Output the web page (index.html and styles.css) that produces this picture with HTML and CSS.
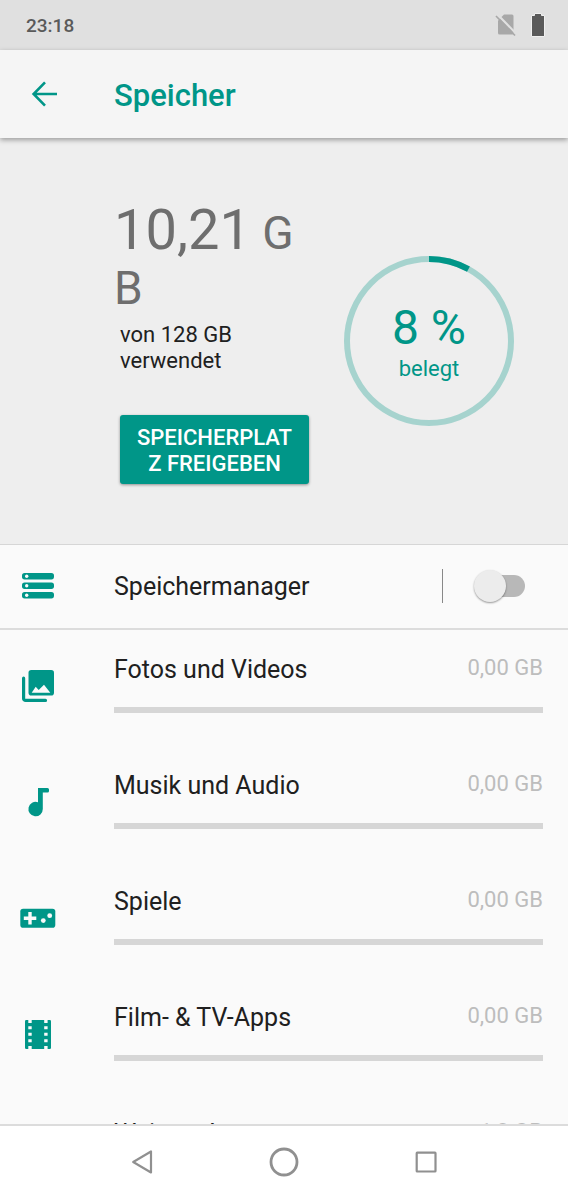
FILE: index.html
```
<!DOCTYPE html>
<html lang="de">
<head>
<meta charset="utf-8">
<meta name="viewport" content="width=device-width, initial-scale=1">
<title>Speicher</title>
<link rel="stylesheet" href="styles.css">
</head>
<body>
<div class="screen">
  <div class="status-bar">
    <span class="clock">23:18</span>
    <svg class="status-icon" width="22" height="24" viewBox="0 0 22 24" aria-hidden="true">
      <path fill="#a8a8a8" d="M9 1.500H17a1.500 1.500 0 0 1 1.500 1.500V20a1.500 1.500 0 0 1-1.500 1.500H4.500A1.500 1.500 0 0 1 3 20V7.500Z"/>
      <path stroke="#e0e0e0" stroke-width="2.200" d="M2.500 1.500 21 20.500"/>
      <path stroke="#a8a8a8" stroke-width="1.700" d="M1 3 20 22.500"/>
    </svg>
    <svg class="status-icon" width="14" height="24" viewBox="0 0 14 24" aria-hidden="true">
      <path fill="#5a5a5a" stroke="#f0f0f0" stroke-width="1" d="M3.500.500h7v2h3v21H.500v-21h3z"/>
    </svg>
  </div>

  <header class="app-bar">
    <button class="back" type="button" aria-label="Zurück">
      <svg width="38" height="38" viewBox="0 0 38 38" aria-hidden="true">
        <path fill="none" stroke="#009688" stroke-width="2.600" d="M32 19H9M20 7.300 8.600 19l11.400 11.700"/>
      </svg>
    </button>
    <h1 class="title">Speicher</h1>
  </header>

  <main class="content">
    <section class="summary">
      <div class="usage">
        <p class="used">10,21<span class="unit">&nbsp;GB</span></p>
        <p class="total">von 128 GB verwendet</p>
        <button class="free-up" type="button">SPEICHERPLATZ FREIGEBEN</button>
      </div>
      <div class="donut">
        <svg class="ring" viewBox="0 0 170 170" aria-hidden="true">
          <circle cx="85" cy="85" r="82" fill="none" stroke="#a6d3ce" stroke-width="6"/>
          <circle cx="85" cy="85" r="82" fill="none" stroke="#009688" stroke-width="6" pathLength="100" stroke-dasharray="8 92" transform="rotate(-90 85 85)"/>
        </svg>
        <div class="donut-label">
          <span class="percent">8&nbsp;%</span>
          <span class="caption">belegt</span>
        </div>
      </div>
    </section>

    <section class="manager">
      <svg class="icon" viewBox="0 0 38 38" aria-hidden="true">
        <g fill="#009688">
          <rect x="3" y="6" width="32" height="6.400" rx="2.600"/>
          <rect x="3" y="15.500" width="32" height="6.400" rx="2.600"/>
          <rect x="3" y="25" width="32" height="6.400" rx="2.600"/>
        </g>
        <g fill="#fafafa">
          <circle cx="7.700" cy="9.200" r="1.700"/>
          <circle cx="7.700" cy="18.700" r="1.700"/>
          <circle cx="7.700" cy="28.200" r="1.700"/>
        </g>
      </svg>
      <label class="name" for="manager-switch">Speichermanager</label>
      <span class="divider"></span>
      <input class="switch" id="manager-switch" type="checkbox" role="switch">
    </section>

    <ul class="categories">
      <li class="category">
        <svg class="icon" viewBox="0 0 38 38" aria-hidden="true">
          <rect x="9.500" y="3" width="25.500" height="25.500" rx="2.800" fill="#009688"/>
          <path fill="#fafafa" d="M12.700 25.700 16.700 19.700 19.700 23 25 17.700 31.300 25.700Z"/>
          <path fill="none" stroke="#009688" stroke-width="3.200" stroke-linecap="round" d="M4.600 11.200V31.400a2 2 0 0 0 2 2H26.500"/>
        </svg>
        <div class="details">
          <span class="name">Fotos und Videos</span>
          <span class="size">0,00 GB</span>
          <div class="bar"></div>
        </div>
      </li>
      <li class="category">
        <svg class="icon" viewBox="0 0 38 38" aria-hidden="true">
          <path fill="#009688" d="M19 5H28.500A1.500 1.500 0 0 1 30 6.500V8A1.500 1.500 0 0 1 28.500 9.500H23.800V26A7.200 7.200 0 1 1 19 19.300Z"/>
        </svg>
        <div class="details">
          <span class="name">Musik und Audio</span>
          <span class="size">0,00 GB</span>
          <div class="bar"></div>
        </div>
      </li>
      <li class="category">
        <svg class="icon" viewBox="0 0 38 38" aria-hidden="true">
          <rect x="1.300" y="9.700" width="35" height="19" rx="2.800" fill="#009688"/>
          <path stroke="#fafafa" stroke-width="3.400" d="M4.800 19.200H17.300M11 13V25.400"/>
          <circle cx="24.300" cy="21.600" r="2.400" fill="#fafafa"/>
          <circle cx="30.700" cy="16.700" r="2.400" fill="#fafafa"/>
        </svg>
        <div class="details">
          <span class="name">Spiele</span>
          <span class="size">0,00 GB</span>
          <div class="bar"></div>
        </div>
      </li>
      <li class="category">
        <svg class="icon" viewBox="0 0 38 38" aria-hidden="true">
          <rect x="6" y="5" width="26" height="29" rx="1.200" fill="#009688"/>
          <path fill="#fafafa" d="M9.300 4.500h3.400V8H9.300zM9.300 11.200h3.400v3H9.300zM9.300 17.700h3.400v3H9.300zM9.300 24.200h3.400v3H9.300zM9.300 31h3.400v3.500H9.300zM25.200 4.500h3.400V8h-3.400zM25.200 11.200h3.400v3h-3.400zM25.200 17.700h3.400v3h-3.400zM25.200 24.200h3.400v3h-3.400zM25.200 31h3.400v3.500h-3.400z"/>
        </svg>
        <div class="details">
          <span class="name">Film- &amp; TV-Apps</span>
          <span class="size">0,00 GB</span>
          <div class="bar"></div>
        </div>
      </li>
      <li class="category">
        <span class="icon"></span>
        <div class="details">
          <span class="name">Weitere Apps</span>
          <span class="size">1,8 GB</span>
          <div class="bar"></div>
        </div>
      </li>
    </ul>
  </main>

  <nav class="nav-bar">
    <button class="nav-button" type="button" aria-label="Zurück">
      <svg width="32" height="32" viewBox="0 0 32 32" aria-hidden="true">
        <path fill="none" stroke="#909090" stroke-width="2.200" stroke-linejoin="round" d="M25 5.500V26.500L7.200 16Z"/>
      </svg>
    </button>
    <button class="nav-button" type="button" aria-label="Startbildschirm">
      <svg width="32" height="32" viewBox="0 0 32 32" aria-hidden="true">
        <circle cx="16" cy="16" r="13" fill="none" stroke="#909090" stroke-width="2.800"/>
      </svg>
    </button>
    <button class="nav-button" type="button" aria-label="Letzte Apps">
      <svg width="32" height="32" viewBox="0 0 32 32" aria-hidden="true">
        <rect x="6.700" y="6.700" width="18.800" height="18.800" rx=".5" fill="none" stroke="#909090" stroke-width="2.200"/>
      </svg>
    </button>
  </nav>
</div>
</body>
</html>
```
FILE: styles.css
```
* {
  box-sizing: border-box;
}

body {
  margin: 0;
  background: #fafafa;
  color: #202020;
  font-family: Roboto, "Liberation Sans", sans-serif;
}

button {
  border: 0;
  padding: 0;
  background: none;
  font: inherit;
}

svg {
  display: block;
}

.screen {
  display: flex;
  flex-direction: column;
  height: 100vh;
}

.status-bar {
  display: flex;
  flex: none;
  align-items: center;
  gap: 14px;
  height: 50px;
  padding: 0 23px 0 26px;
  background: #e0e0e0;
}

.clock {
  flex: 1;
  padding-top: 2px;
  color: #5a5a5a;
  font-size: 19px;
  font-weight: 500;
  line-height: 24px;
}

.app-bar {
  position: relative;
  z-index: 1;
  display: flex;
  flex: none;
  align-items: center;
  gap: 51px;
  height: 88px;
  padding: 0 25px;
  background: #f5f5f5;
  box-shadow: 0 2px 5px rgba(0, 0, 0, 0.35);
}

.title {
  margin: 4px 0 0;
  color: #009688;
  font-size: 31px;
  font-weight: 500;
  line-height: 40px;
}

.content {
  flex: 1;
  min-height: 0;
  overflow-y: auto;
  scrollbar-width: none;
}

.summary {
  display: flex;
  align-items: center;
  gap: 35px;
  padding: 65px 54px 60px 114px;
  border-bottom: 1px solid #d6d6d6;
  background: #eeeeee;
}

.usage {
  flex: 1;
  min-width: 0;
}

.used {
  margin: 0;
  color: #6e6e6e;
  font-size: 56px;
  line-height: 55px;
  word-break: break-all;
}

.unit {
  font-size: 46px;
  line-height: 46px;
}

.total {
  margin: 9px 0 41px 6px;
  font-size: 22px;
  line-height: 26px;
}

.free-up {
  display: block;
  width: calc(100% - 6px);
  margin-left: 6px;
  padding: 10px 14px 7px;
  border-radius: 3px;
  background: #009688;
  box-shadow: 0 1px 3px rgba(0, 0, 0, 0.4);
  color: #ffffff;
  font-size: 22px;
  font-weight: 500;
  line-height: 26px;
  text-align: center;
  word-break: break-all;
}

.donut {
  display: grid;
  flex: none;
  place-items: center;
  width: 170px;
  margin-bottom: 5px;
  color: #009688;
}

.ring,
.donut-label {
  grid-area: 1 / 1;
}

.donut-label {
  display: flex;
  flex-direction: column;
  align-items: center;
}

.percent {
  font-size: 48px;
  line-height: 56px;
}

.caption {
  font-size: 22px;
  line-height: 26px;
}

.manager {
  display: flex;
  align-items: center;
  height: 85px;
  padding: 0 43px 2px 19px;
  border-bottom: 2px solid #dcdcdc;
}

.manager .name {
  padding-top: 3px;
}

.icon {
  flex: none;
  width: 38px;
  height: 38px;
  margin-right: 57px;
}

.name {
  flex: 1;
  font-size: 25px;
  line-height: 30px;
}

.divider {
  width: 1px;
  height: 34px;
  margin-right: 33px;
  background: #888888;
}

.switch {
  display: flex;
  align-items: center;
  width: 49px;
  height: 22px;
  margin: 0;
  border-radius: 11px;
  appearance: none;
  background: #b8b8b8;
}

.switch::before {
  flex: none;
  width: 32px;
  height: 32px;
  margin-left: -2px;
  border-radius: 50%;
  background: #ececec;
  box-shadow: 0 1px 2px rgba(0, 0, 0, 0.4);
  content: "";
}

.switch:checked {
  justify-content: flex-end;
  background: #80cbc4;
}

.categories {
  margin: 0;
  padding: 0;
  list-style: none;
}

.category {
  display: flex;
  align-items: center;
  height: 116px;
  padding: 0 25px 4px 19px;
}

.details {
  display: flex;
  flex: 1;
  flex-wrap: wrap;
  align-items: flex-start;
  row-gap: 22px;
  padding-bottom: 5px;
}

.size {
  color: #bdbdbd;
  font-size: 22px;
  line-height: 25px;
}

.bar {
  width: 100%;
  height: 6px;
  background: #d6d6d6;
}

.nav-bar {
  display: grid;
  flex: none;
  grid-template-columns: repeat(3, 1fr);
  height: 76px;
  padding: 0 12.5% 2px;
  border-top: 2px solid #dcdcdc;
  background: #ffffff;
}

.nav-button {
  display: grid;
  place-items: center;
}
```
